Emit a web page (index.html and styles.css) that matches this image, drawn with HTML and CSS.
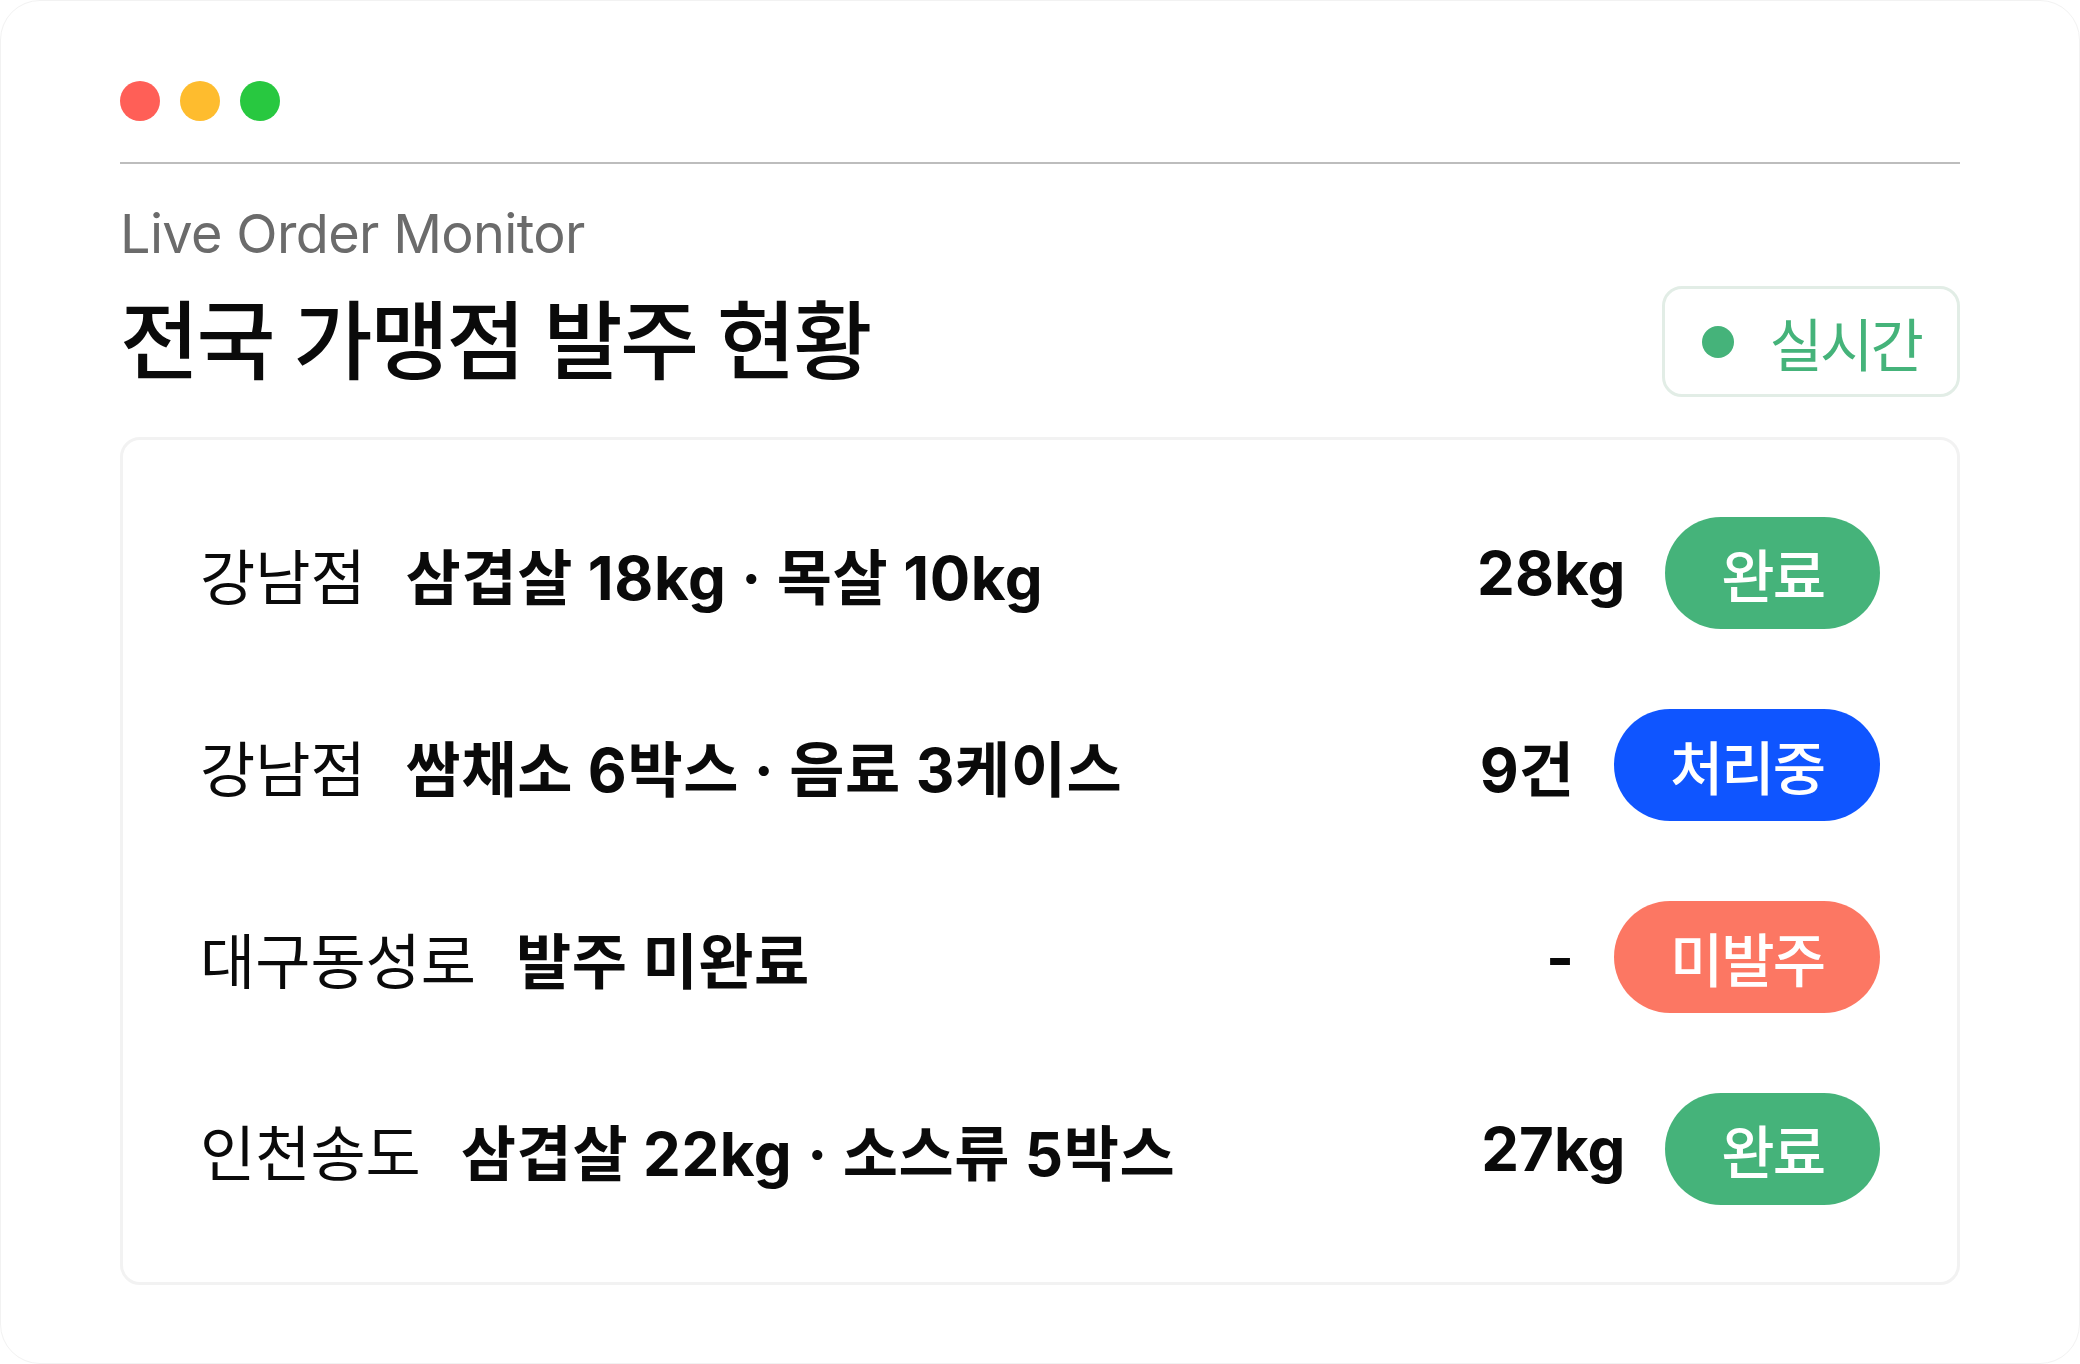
FILE: index.html
```html
<!DOCTYPE html>
<html lang="ko">
<head>
  <meta charset="UTF-8" />
  <meta name="viewport" content="width=device-width, initial-scale=1" />
  <title>Live Order Monitor</title>
  <link rel="stylesheet" href="styles.css">
</head>
<body>
  <div class="window">
    <div class="dots">
      <span class="dot red"></span>
      <span class="dot yellow"></span>
      <span class="dot green"></span>
    </div>
    <div class="divider"></div>

    <p class="eyebrow">Live Order Monitor</p>
    <div class="title-row">
      <h1 class="title">전국 가맹점 발주 현황</h1>
      <div class="live">
        <span class="live-dot"></span>
        <span class="live-text">실시간</span>
      </div>
    </div>

    <div class="orders">
      <div class="order">
        <span class="store">강남점</span>
        <span class="items">삼겹살 18kg · 목살 10kg</span>
        <span class="amount">28kg</span>
        <span class="pill done">완료</span>
      </div>
      <div class="order">
        <span class="store">강남점</span>
        <span class="items">쌈채소 6박스 · 음료 3케이스</span>
        <span class="amount">9건</span>
        <span class="pill working">처리중</span>
      </div>
      <div class="order">
        <span class="store">대구동성로</span>
        <span class="items">발주 미완료</span>
        <span class="amount">-</span>
        <span class="pill missing">미발주</span>
      </div>
      <div class="order">
        <span class="store">인천송도</span>
        <span class="items">삼겹살 22kg · 소스류 5박스</span>
        <span class="amount">27kg</span>
        <span class="pill done">완료</span>
      </div>
    </div>
  </div>
</body>
</html>
```

FILE: styles.css
```css
body {
  margin: 0;
  background: #fff;
  font-family: Inter, "Noto Sans CJK KR", sans-serif;
  color: #0a0a0a;
}
.window {
  box-sizing: border-box;
  width: 2080px;
  height: 1364px;
  padding: 80px 119px;
  border: 1px solid #f2f2f2;
  border-radius: 40px;
  background: #fff;
}
.dots {
  display: flex;
  gap: 20px;
}
.dot {
  width: 40px;
  height: 40px;
  border-radius: 50%;
}
.red { background: #ff5f57; }
.yellow { background: #febc2e; }
.green { background: #28c840; }
.divider {
  height: 2px;
  margin-top: 41px;
  background: #bdbdbd;
}
.eyebrow {
  margin: 38px 0 0;
  font-size: 54px;
  line-height: 64px;
  letter-spacing: -0.012em;
  color: #6b6b6b;
}
.title-row {
  display: flex;
  align-items: center;
  justify-content: space-between;
  margin-top: 20px;
}
.title {
  margin: 0;
  font-size: 86px;
  font-weight: 500;
  line-height: 1;
  letter-spacing: -0.03em;
}
.live {
  box-sizing: border-box;
  display: flex;
  align-items: center;
  gap: 36px;
  height: 111px;
  padding: 0 36px 0 37px;
  border: 3px solid #e2ede6;
  border-radius: 20px;
}
.live-dot {
  width: 32px;
  height: 32px;
  border-radius: 50%;
  background: #45b37a;
}
.live-text {
  font-size: 58px;
  letter-spacing: -0.05em;
  color: #45b37a;
}
.orders {
  display: flex;
  flex-direction: column;
  gap: 80px;
  margin-top: 40px;
  padding: 77px 77px;
  border: 3px solid #f2f2f2;
  border-radius: 20px;
}
.order {
  display: flex;
  align-items: center;
  height: 112px;
  font-size: 60px;
}
.items {
  margin-left: 40px;
  font-weight: 700;
  letter-spacing: 0.01em;
}
.amount {
  margin-left: auto;
  margin-right: 40px;
  font-weight: 700;
}
.pill {
  display: flex;
  align-items: center;
  height: 112px;
  padding: 0 56px;
  border-radius: 56px;
  font-size: 58px;
  font-weight: 500;
  letter-spacing: -0.035em;
  color: #fff;
}
.done { background: #45b37a; }
.working { background: #0f55ff; }
.missing { background: #fc7763; }
```
